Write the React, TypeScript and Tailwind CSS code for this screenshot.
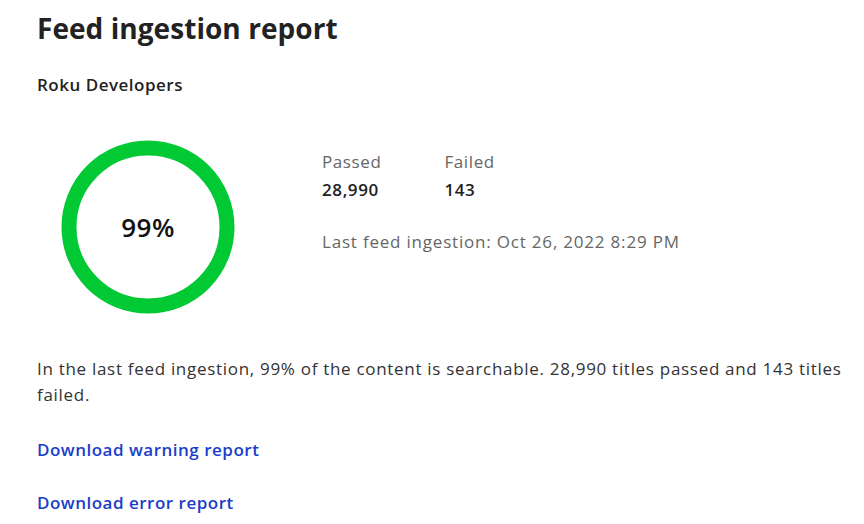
const font = { fontFamily: '"Open Sans", "Liberation Sans", sans-serif' }

function Ring({ percent }: { percent: number }) {
  return (
    <div className="relative h-[174px] w-[174px] shrink-0">
      <svg width="174" height="174" viewBox="0 0 174 174">
        <circle cx="87" cy="87" r="79" fill="none" stroke="#00c934" strokeWidth="15" />
      </svg>
      <div className="absolute inset-0 flex items-center justify-center text-[26px] font-semibold tracking-[0.5px] text-[#111]">
        {percent}%
      </div>
    </div>
  )
}

export default function App() {
  return (
    <div className="min-h-[524px] w-[864px] bg-white px-[37px] pt-[8px] text-[#222]" style={font}>
      <h1 className="text-[28px] font-bold leading-[40px] tracking-[0.05px] text-[#222]">Feed ingestion report</h1>
      <div className="mt-[25px] text-[17px] font-semibold leading-[24px] tracking-[0.5px]">Roku Developers</div>

      <div className="mt-[43px] flex items-start">
        <div className="ml-[24px]">
          <Ring percent={99} />
        </div>
        <div className="ml-[87px] pt-[10px]">
          <div className="flex gap-[63px]">
            <div>
              <div className="text-[17px] leading-[24px] tracking-[0.6px] text-[#666]">Passed</div>
              <div className="mt-[4px] text-[17px] font-semibold leading-[24px] tracking-[0.6px] text-[#222]">28,990</div>
            </div>
            <div>
              <div className="text-[17px] leading-[24px] tracking-[0.6px] text-[#666]">Failed</div>
              <div className="mt-[4px] text-[17px] font-semibold leading-[24px] tracking-[0.6px] text-[#222]">143</div>
            </div>
          </div>
          <div className="mt-[28px] text-[17px] leading-[24px] tracking-[0.8px] text-[#666]">
            Last feed ingestion: Oct 26, 2022 8:29 PM
          </div>
        </div>
      </div>

      <p className="mt-[42px] w-[810px] text-[17px] leading-[26px] tracking-[0.7px] text-[#333]">
        In the last feed ingestion, 99% of the content is searchable. 28,990 titles passed and 143 titles failed.
      </p>

      <div className="mt-[30px] flex flex-col gap-[29px]">
        <a className="text-[17px] font-semibold leading-[24px] tracking-[0.5px] text-[#1a3ec8]" href="#">
          Download warning report
        </a>
        <a className="text-[17px] font-semibold leading-[24px] tracking-[0.5px] text-[#1a3ec8]" href="#">
          Download error report
        </a>
      </div>
    </div>
  )
}
